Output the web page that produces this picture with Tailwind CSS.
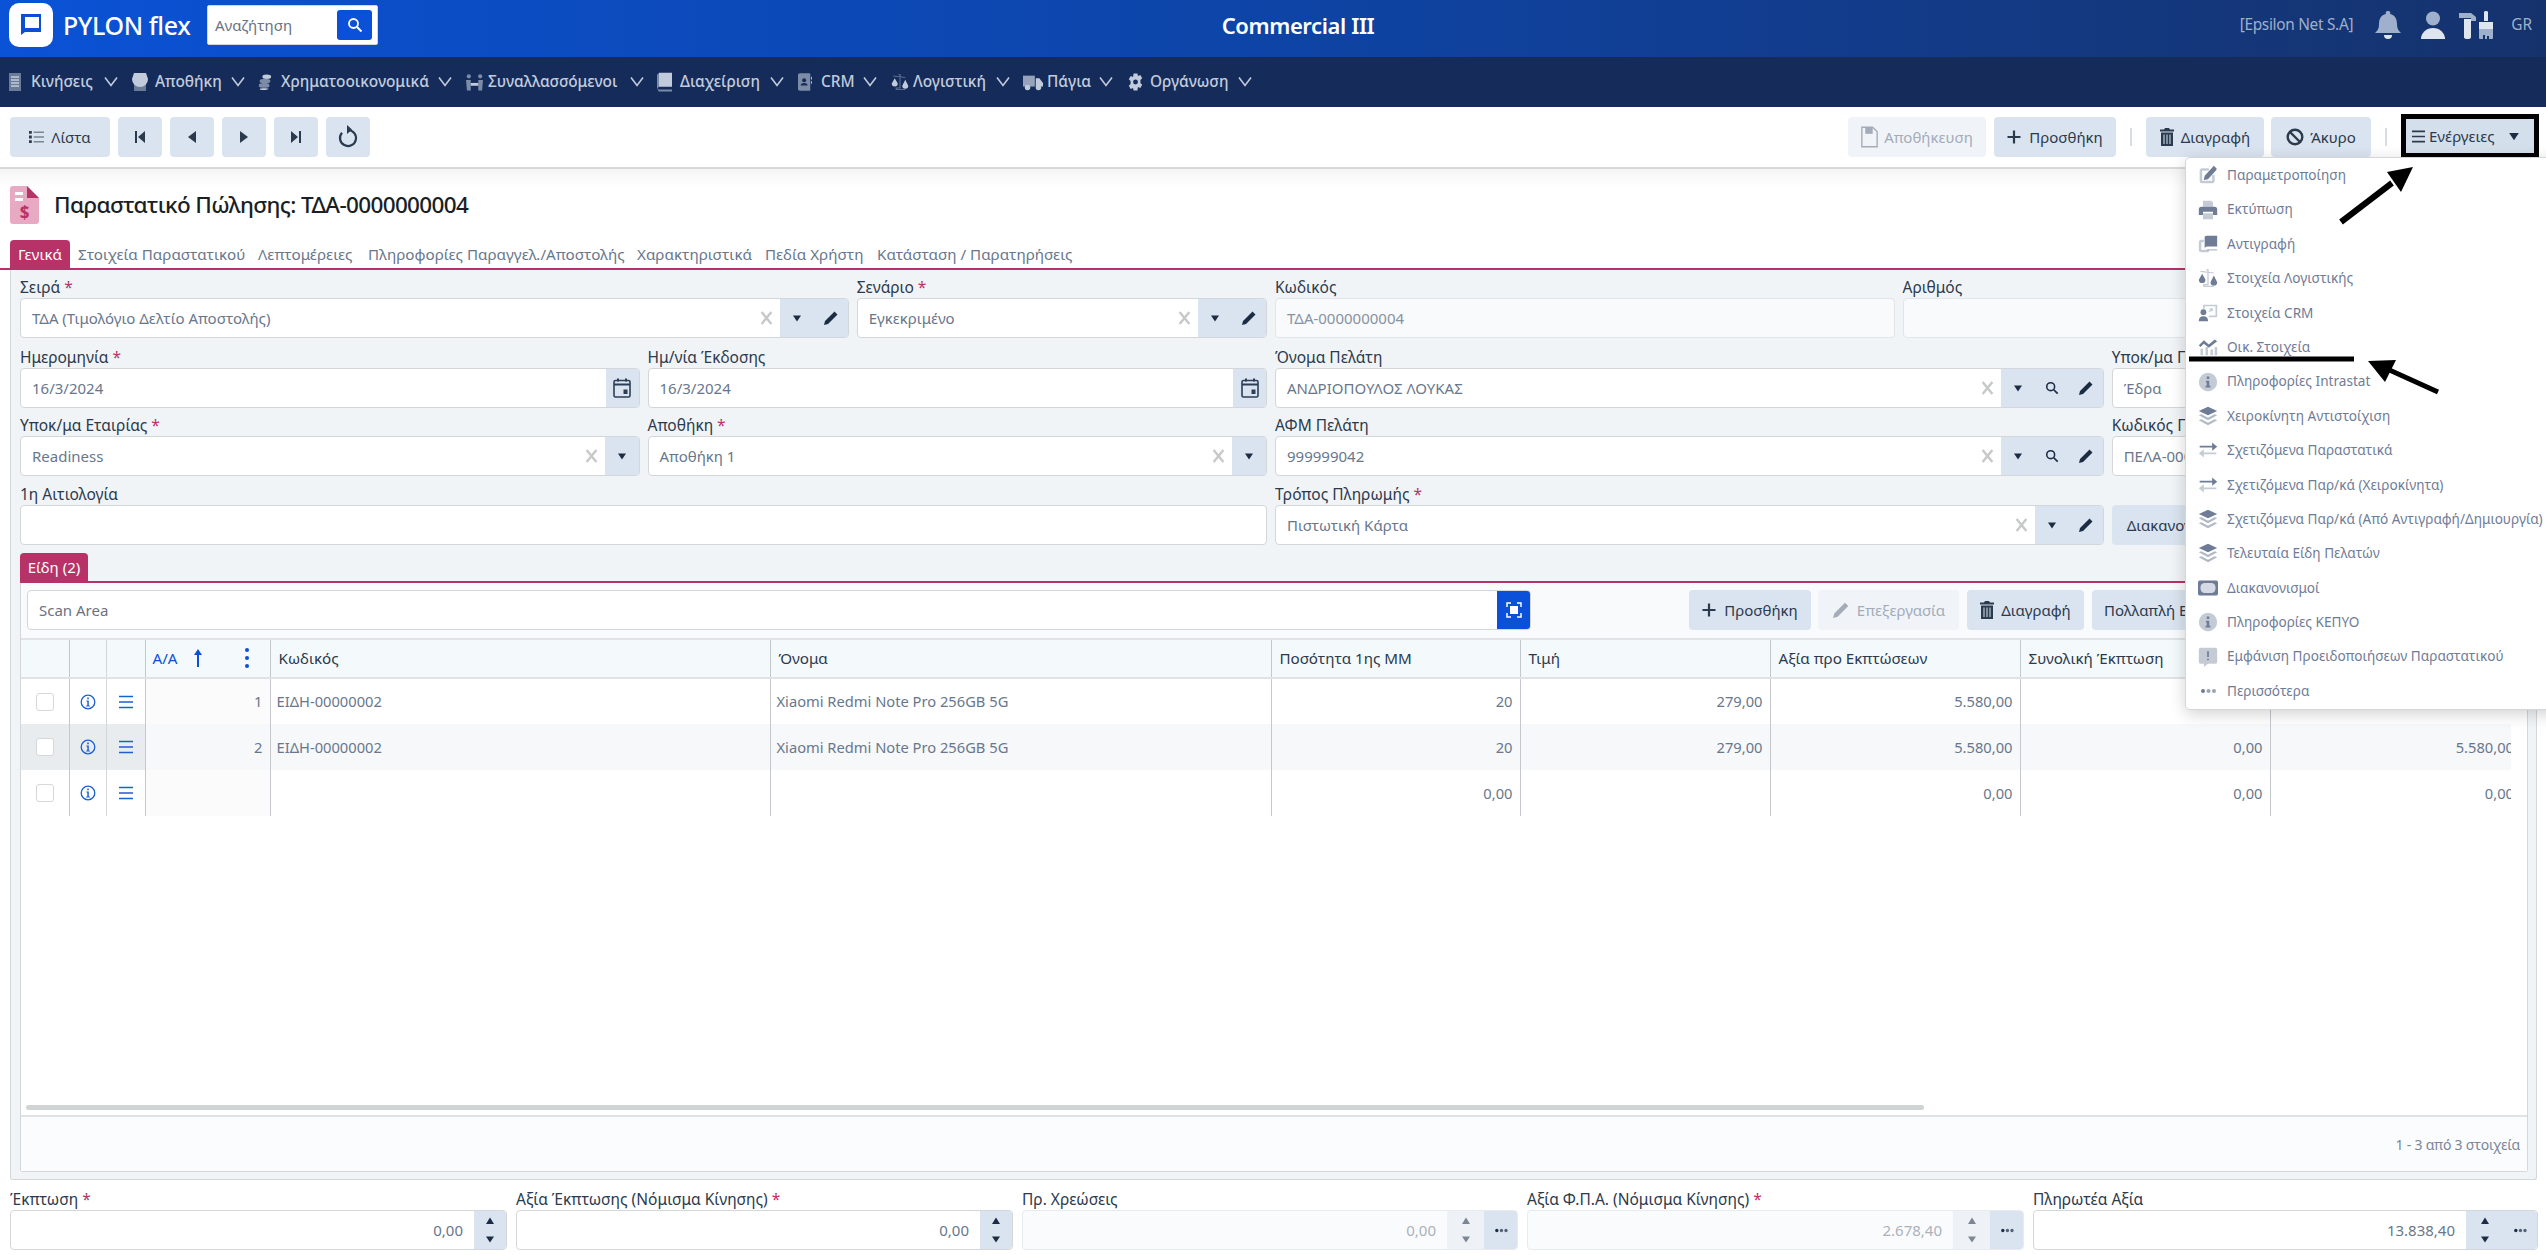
<!DOCTYPE html>
<html lang="el">
<head>
<meta charset="UTF-8">
<title>Commercial III</title>
<script src="https://cdn.jsdelivr.net/npm/@tailwindcss/browser@4"></script>
</head>
<body class="font-['Noto_Sans','Open_Sans',sans-serif] text-[15px] text-[#2b3a4d] bg-white h-screen overflow-hidden relative">

<!-- icon sprites, duotone like the app's icon font -->
<svg class="hidden">
  <symbol id="caret" viewBox="0 0 10 10"><path d="M1 2.5h8L5 8.5z" fill="currentColor"/></symbol>
  <symbol id="caret-up" viewBox="0 0 10 10"><path d="M1 8h8L5 1.5z" fill="currentColor"/></symbol>
  <symbol id="chev" viewBox="0 0 14 14"><path d="M1 2.5l6 8 6-8" fill="none" stroke="currentColor" stroke-width="1.6"/></symbol>
  <symbol id="times" viewBox="0 0 12 14"><path d="M1.5 1.5l9 11M10.5 1.5l-9 11" fill="none" stroke="currentColor" stroke-width="2.2"/></symbol>
  <symbol id="pencil" viewBox="0 0 16 16"><path d="M11.5 1.5l3 3-9.5 9.5-4 1 1-4z M3 11.5l1.5 1.5" fill="currentColor"/></symbol>
  <symbol id="search" viewBox="0 0 16 16"><circle cx="6.5" cy="6.5" r="4.5" fill="none" stroke="currentColor" stroke-width="1.8"/><path d="M10 10l4.5 4.5" stroke="currentColor" stroke-width="2"/></symbol>
  <symbol id="cal" viewBox="0 0 18 20"><path d="M4 0.5h2v3H4zM12 0.5h2v3h-2z" fill="currentColor"/><rect x="1" y="2.5" width="16" height="16.5" rx="1.5" fill="none" stroke="currentColor" stroke-width="1.6"/><path d="M1 6.5h16" stroke="currentColor" stroke-width="2"/><rect x="10.5" y="11.5" width="4" height="4.5" fill="currentColor"/></symbol>
  <symbol id="dots" viewBox="0 0 16 6"><circle cx="3" cy="3" r="2" fill="currentColor"/><circle cx="8.5" cy="3" r="2" fill="currentColor" opacity=".7"/><circle cx="14" cy="3" r="2" fill="currentColor" opacity=".7"/></symbol>
  <symbol id="info" viewBox="0 0 16 16"><circle cx="8" cy="8" r="6.8" fill="none" stroke="currentColor" stroke-width="1.3"/><path d="M7.2 3.6h1.6v1.7H7.2zM6.4 6.6h2.4v5h1v1H6.2v-1h1.1V7.6h-.9z" fill="currentColor"/></symbol>
  <symbol id="lines" viewBox="0 0 14 14"><path d="M0 1.5h14M0 7h14M0 12.5h14" stroke="currentColor" stroke-width="1.7"/></symbol>
  <symbol id="list" viewBox="0 0 16 14"><path d="M0 0.5h3v3H0zM0 5.5h3v3H0zM0 10.5h3v3H0z" fill="currentColor"/><path d="M5 2h11M5 7h11M5 12h11" stroke="currentColor" stroke-width="1.6" opacity=".55"/></symbol>
  <symbol id="trash" viewBox="0 0 14 18"><path d="M5 0h4l1 1.500h4v2H0v-2h4zM1 4.500h12V18H1z" fill="currentColor"/><path d="M4 6.500v9.500M7 6.500v9.500M10 6.500v9.500" stroke="#dae4f0" stroke-width="1"/></symbol>
  <symbol id="ban" viewBox="0 0 18 18"><circle cx="9" cy="9" r="7.300" fill="none" stroke="currentColor" stroke-width="2.400"/><path d="M4 4l10 10" stroke="currentColor" stroke-width="2.400"/></symbol>
  <symbol id="plus" viewBox="0 0 14 14"><path d="M7 0.500v13M0.500 7h13" stroke="currentColor" stroke-width="2.200"/></symbol>
  <symbol id="save" viewBox="0 0 16 20"><path d="M0.800 0.800h10l4.400 4v14.400H0.800z" fill="none" stroke="currentColor" stroke-width="1.300"/><path d="M4 1h7v6H4z" fill="currentColor"/></symbol>

  <symbol id="m-edit" viewBox="0 0 24 24"><path d="M2 7a3 3 0 013-3h8v3H5v12h12v-7h3v7a3 3 0 01-3 3H5a3 3 0 01-3-3z" fill="currentColor" opacity=".4"/><path d="M19 1l3 3a1.500 1.500 0 010 2L12 17l-5 1 1-5z" fill="currentColor"/></symbol>
  <symbol id="m-print" viewBox="0 0 24 24"><path d="M6 1h10l2 2v5H6zM6 16h12v7H6z" fill="currentColor" opacity=".4"/><path d="M4 8h16a3 3 0 013 3v7h-5v-4H6v4H1v-7a3 3 0 013-3z" fill="currentColor"/></symbol>
  <symbol id="m-copy" viewBox="0 0 24 24"><path d="M1 10a3 3 0 013-3h3v3H4v9h9v3H4a3 3 0 01-3-3z" fill="currentColor" opacity=".4"/><path d="M8 17V4a2 2 0 012-2h13v13H11a3 3 0 00-3 3z" fill="currentColor"/><path d="M11 18h12v2H11z" fill="currentColor" opacity=".4"/></symbol>
  <symbol id="m-scale" viewBox="0 0 24 24"><path d="M3 4l16 2M10 2h2v18H7v2h12" fill="none" stroke="currentColor" stroke-width="1.500" opacity=".4"/><path d="M5 7l-4 7a4 4 0 008 0zM19 9l-4 8a4 4 0 008 0z" fill="currentColor"/></symbol>
  <symbol id="m-crm" viewBox="0 0 24 24"><path d="M7 2h15a1 1 0 011 1v13a1 1 0 01-1 1H13v-2h8V4H8v3H6V3a1 1 0 011-1z" fill="currentColor" opacity=".4"/><path d="M13 11l4-4M14 7h3v3" fill="none" stroke="currentColor" stroke-width="1.500" opacity=".4"/><circle cx="6.500" cy="11" r="3.500" fill="currentColor"/><path d="M1 21a5 5 0 015-5h1a5 5 0 015 5v1H1z" fill="currentColor"/></symbol>
  <symbol id="m-chart" viewBox="0 0 24 24"><path d="M3 14h3v8H3zM9 12h3v10H9zM15 15h3v7h-3zM20 12h3v10h-3z" fill="currentColor" opacity=".4"/><path d="M1 10l6-6 6 5 7-6 3 2-10 8-6-5-4 4z" fill="currentColor"/></symbol>
  <symbol id="m-info" viewBox="0 0 24 24"><circle cx="12" cy="12" r="11" fill="currentColor" opacity=".4"/><path d="M10.500 5.500h3v3h-3zM9.500 10.500h4v6h1.500v2H9v-2h1.500v-4h-1z" fill="currentColor"/></symbol>
  <symbol id="m-layers" viewBox="0 0 24 24"><path d="M12 1l11 5-11 5L1 6z" fill="currentColor"/><path d="M1 11l3-1 8 4 8-4 3 1-11 6zM1 17l3-1 8 4 8-4 3 1-11 6z" fill="currentColor" opacity=".55"/></symbol>
  <symbol id="m-arrows" viewBox="0 0 24 24"><path d="M2 7h15V3l6 5-6 5V9H2z" fill="currentColor"/><path d="M22 15H7v-4l-6 5 6 5v-4h15z" fill="currentColor" opacity=".4"/></symbol>
  <symbol id="m-money" viewBox="0 0 24 24"><rect y="3" width="24" height="18" rx="2" fill="currentColor"/><rect x="3" y="6" width="18" height="12" rx="5" fill="#d6dae4"/></symbol>
  <symbol id="m-alert" viewBox="0 0 24 24"><path d="M3 1h18a2 2 0 012 2v15a2 2 0 01-2 2h-9l-5 4v-4H3a2 2 0 01-2-2V3a2 2 0 012-2z" fill="currentColor" opacity=".4"/><path d="M11 5h2v7h-2zM11 14h2v2h-2z" fill="currentColor"/></symbol>

  <symbol id="n-list" viewBox="0 0 12 20"><path d="M0 1h12v18H0z" fill="currentColor" opacity=".5"/><path d="M2 5h8M2 8h8M2 11h8M2 14h8" stroke="currentColor" stroke-width="1.400"/></symbol>
  <symbol id="n-store" viewBox="0 0 16 20"><path d="M2 1h12l2 6a2 2 0 01-16 0z" fill="currentColor"/><path d="M2 10h12v9H2z" fill="currentColor" opacity=".5"/></symbol>
  <symbol id="n-coins" viewBox="0 0 16 20"><ellipse cx="10" cy="4" rx="5" ry="2.500" fill="currentColor"/><path d="M2 8c0-2 12-2 12 0v2c0 2-12 2-12 0zM1 13c0-2 12-2 12 0v2c0 2-12 2-12 0z" fill="currentColor" opacity=".6"/><path d="M2 18c0-1 10-1 10 0s-10 2-10 0z" fill="currentColor"/></symbol>
  <symbol id="n-people" viewBox="0 0 18 20"><circle cx="3" cy="4" r="2.200" fill="currentColor" opacity=".6"/><circle cx="15" cy="4" r="2.200" fill="currentColor" opacity=".6"/><path d="M0 8h5v11H1zM13 8h5l-1 11h-4z" fill="currentColor" opacity=".6"/><path d="M5 11h8v3H5z" fill="currentColor"/></symbol>
  <symbol id="n-book" viewBox="0 0 16 20"><path d="M2 0h14v15H3a3 3 0 00-1 0z" fill="currentColor"/><path d="M0 3a2 2 0 012-2v14a3 3 0 000 5h14v-2H3a3 3 0 01-3-1z" fill="currentColor" opacity=".6"/></symbol>
  <symbol id="n-addr" viewBox="0 0 16 20"><path d="M2 0h11a1 1 0 011 1v18a1 1 0 01-1 1H2a2 2 0 01-2-2V2a2 2 0 012-2z" fill="currentColor" opacity=".6"/><circle cx="7" cy="8" r="2.300" fill="#152c5b"/><path d="M3 14a4 3 0 018 0z" fill="#152c5b"/><path d="M15 4h1v3h-1zM15 9h1v3h-1z" fill="currentColor"/></symbol>
  <symbol id="n-truck" viewBox="0 0 22 20"><path d="M0 3h13v12H0z" fill="currentColor" opacity=".75"/><path d="M14 6h4l4 5v4h-8z" fill="currentColor"/><circle cx="5" cy="16" r="3" fill="currentColor"/><circle cx="17" cy="16" r="3" fill="currentColor"/></symbol>
  <symbol id="n-gear" viewBox="0 0 18 20"><path d="M7 1h4l.6 2.600 2.500-1 2 3.400-1.900 1.900v3.200l1.900 1.900-2 3.400-2.500-1L11 19H7l-.6-2.600-2.500 1-2-3.400 1.900-1.900V8.900L1.900 7l2-3.400 2.500 1z" fill="currentColor"/><circle cx="9" cy="10" r="2.600" fill="#152c5b"/></symbol>
</svg>

<!-- top bar -->
<header class="h-[57px] pb-[7px] bg-linear-to-r from-[#0a52d6] via-[#0d44a6] to-[#15326c] flex items-center relative">
  <div class="ml-[9px] w-[44px] h-[44px] bg-white rounded-[10px] flex items-center justify-center">
    <svg class="w-[24px] h-[24px]" viewBox="0 0 24 24"><path d="M2 1h20v18H6l-4 3z" fill="#0b50cf"/><path d="M6 4h14v11H6z" fill="#fff"/></svg>
  </div>
  <span class="ml-[10px] w-[134px] text-white text-[25px] leading-none font-medium tracking-[-0.4px] whitespace-nowrap">PYLON flex</span>
  <div class="ml-[10px] w-[171px] h-10 bg-white rounded-[2px] border border-[#d4d7d9] flex items-center">
    <span class="ml-[7px] flex-1 text-[#6b7280]">Αναζήτηση</span>
    <span class="mr-[5px] w-[35px] h-[30px] bg-[#0b50d8] rounded-[3px] flex items-center justify-center text-white"><svg class="w-4 h-4"><use href="#search"/></svg></span>
  </div>
  <span class="absolute left-[1198px] top-[10px] w-[200px] leading-[30px] text-center text-white text-[22px] font-semibold whitespace-nowrap tracking-[-0.4px]">Commercial III</span>
  <div class="ml-auto flex items-center text-[#9fb0cc]">
    <span class="mr-[22px] text-[15.4px] tracking-[-0.3px]">[Epsilon Net S.A]</span>
    <svg class="w-[26px] h-[28px] mr-[19px]" viewBox="0 0 26 28"><path d="M13 0a2 2 0 012 3c5 1 7 5 7 10 0 4 1 6 4 9H0c3-3 4-5 4-9 0-5 2-9 7-10a2 2 0 012-3z" fill="currentColor"/><path d="M9 24h8a4 4 0 01-8 0z" fill="#dfe5ee"/></svg>
    <svg class="w-[26px] h-[28px] mr-[13px]" viewBox="0 0 26 28"><circle cx="13" cy="7.500" r="7" fill="currentColor"/><path d="M1 28a12 11 0 0124 0z" fill="#dfe5ee"/></svg>
    <svg class="w-[37px] h-[28px] mr-[15px]" viewBox="0 0 37 28"><path d="M0 2h12l5 4v4h-5V7H0z" fill="currentColor"/><path d="M5 8h7v18a3.500 2 0 01-7 0z" fill="#dfe5ee"/><path d="M25 1a2 1 0 014 0v9h-4z" fill="#dfe5ee"/><path d="M20 11h14v7H20z" fill="#dfe5ee"/><path d="M20 18h14v9a1 1 0 01-1 1h-3v-3h-2v3h-2v-4h-2v4h-3a1 1 0 01-1-1z" fill="currentColor"/></svg>
    <span class="mr-[14px] text-[15.4px]">GR</span>
  </div>
</header>

<!-- main menu -->
<nav class="h-[50px] bg-[#152c5b] flex items-center pl-[9px] text-[#c2cbdb] text-[15.4px] font-medium whitespace-nowrap">
  <svg class="w-[12px] h-[20px] mr-[10px]"><use href="#n-list"/></svg><span class="w-[64px]">Κινήσεις</span><svg class="w-[14px] h-[14px] ml-[9px] mr-[14px]"><use href="#chev"/></svg>
  <svg class="w-[16px] h-[20px] mr-[7px]"><use href="#n-store"/></svg><span class="w-[66px]">Αποθήκη</span><svg class="w-[14px] h-[14px] ml-[10px] mr-[13px]"><use href="#chev"/></svg>
  <svg class="w-[14px] h-[20px] mr-[9px]"><use href="#n-coins"/></svg><span class="w-[148px]">Χρηματοοικονομικά</span><svg class="w-[14px] h-[14px] ml-[9px] mr-[14px]"><use href="#chev"/></svg>
  <svg class="w-[17px] h-[20px] mr-[5px]"><use href="#n-people"/></svg><span class="w-[132px]">Συναλλασσόμενοι</span><svg class="w-[14px] h-[14px] ml-[10px] mr-[13px]"><use href="#chev"/></svg>
  <svg class="w-[15px] h-[20px] mr-[8px]"><use href="#n-book"/></svg><span class="w-[80px]">Διαχείριση</span><svg class="w-[14px] h-[14px] ml-[10px] mr-[14px]"><use href="#chev"/></svg>
  <svg class="w-[14px] h-[20px] mr-[9px]"><use href="#n-addr"/></svg><span class="w-[33px]">CRM</span><svg class="w-[14px] h-[14px] ml-[9px] mr-[14px]"><use href="#chev"/></svg>
  <svg class="w-[18px] h-[20px] mr-[4px]"><use href="#m-scale"/></svg><span class="w-[73px]">Λογιστική</span><svg class="w-[14px] h-[14px] ml-[10px] mr-[13px]"><use href="#chev"/></svg>
  <svg class="w-[20px] h-[20px] mr-[4px]"><use href="#n-truck"/></svg><span class="w-[43px]">Πάγια</span><svg class="w-[14px] h-[14px] ml-[9px] mr-[14px]"><use href="#chev"/></svg>
  <svg class="w-[17px] h-[20px] mr-[6px]"><use href="#n-gear"/></svg><span class="w-[78px]">Οργάνωση</span><svg class="w-[14px] h-[14px] ml-[10px]"><use href="#chev"/></svg>
</nav>

<!-- record toolbar -->
<div class="h-[62px] border-b-2 border-[#d8d8d8] flex items-start pt-[10px] pl-[10px] pr-[7px]">
  <button class="w-[100px] h-10 bg-[#dae4f0] rounded-[4px] flex items-center justify-center gap-[7px]"><svg class="w-[15px] h-[14px]"><use href="#list"/></svg>Λίστα</button>
  <button class="ml-2 w-[44px] h-10 bg-[#dae4f0] rounded-[4px] flex items-center justify-center"><svg class="w-[12px] h-[14px]" viewBox="0 0 12 14"><path d="M1 1h2v12H1zM11 1v12L4 7z" fill="currentColor"/></svg></button>
  <button class="ml-2 w-[44px] h-10 bg-[#dae4f0] rounded-[4px] flex items-center justify-center"><svg class="w-[10px] h-[14px]" viewBox="0 0 10 14"><path d="M9 1v12L1 7z" fill="currentColor"/></svg></button>
  <button class="ml-2 w-[44px] h-10 bg-[#dae4f0] rounded-[4px] flex items-center justify-center"><svg class="w-[10px] h-[14px]" viewBox="0 0 10 14"><path d="M1 1v12l8-6z" fill="currentColor"/></svg></button>
  <button class="ml-2 w-[44px] h-10 bg-[#dae4f0] rounded-[4px] flex items-center justify-center"><svg class="w-[12px] h-[14px]" viewBox="0 0 12 14"><path d="M1 1v12l7-6zM9 1h2v12H9z" fill="currentColor"/></svg></button>
  <button class="ml-2 w-[44px] h-10 bg-[#dae4f0] rounded-[4px] flex items-center justify-center"><svg class="w-[20px] h-[24px]" viewBox="0 0 20 24"><path d="M10 5a8 8 0 11-6 2.700" fill="none" stroke="currentColor" stroke-width="2.200"/><path d="M9 0v9l5-4.500z" fill="currentColor"/></svg></button>

  <button class="ml-auto w-[138px] h-10 bg-[#f0f4f8] rounded-[4px] flex items-center justify-center gap-[6px] text-[#a4acb8]"><svg class="w-[17px] h-[22px]"><use href="#save"/></svg>Αποθήκευση</button>
  <button class="ml-2 w-[122px] h-10 bg-[#dae4f0] rounded-[4px] flex items-center justify-center gap-[8px]"><svg class="w-[14px] h-[14px]"><use href="#plus"/></svg>Προσθήκη</button>
  <span class="ml-[14px] mt-[11px] w-[2px] h-[18px] bg-[#d8dde3]"></span>
  <button class="ml-[14px] w-[118px] h-10 bg-[#dae4f0] rounded-[4px] flex items-center justify-center gap-[7px]"><svg class="w-[14px] h-[18px]"><use href="#trash"/></svg>Διαγραφή</button>
  <button class="ml-[7px] w-[100px] h-10 bg-[#dae4f0] rounded-[4px] flex items-center justify-center gap-[6px]"><svg class="w-[18px] h-[18px]"><use href="#ban"/></svg>Άκυρο</button>
  <span class="ml-[14px] mt-[11px] w-[2px] h-[18px] bg-[#d8dde3]"></span>
  <div class="ml-[14px] -mt-[3px] w-[138px] h-[44px] border-[5px] border-black bg-[#d4dfec] flex items-center pl-[6px]">
    <svg class="w-[13px] h-[13px] mr-[4px]"><use href="#lines"/></svg>Ενέργειες<svg class="ml-[13px] w-[12px] h-[12px] text-[#1c2c44]"><use href="#caret"/></svg>
  </div>
</div>

<!-- title -->
<div class="h-[71px] bg-linear-to-b from-[#f5f5f5] to-white to-[25%] flex items-center pl-[10px]">
  <svg class="w-[29px] h-[38px]" viewBox="0 0 29 38"><path d="M3 0h14l12 12v23a3 3 0 01-3 3H3a3 3 0 01-3-3V3a3 3 0 013-3z" fill="#e8a9c3"/><path d="M17 0l12 12H17z" fill="#b73266"/><path d="M5 6h8v3H5zM5 12h8v3H5z" fill="#fff"/><text x="14.500" y="33" text-anchor="middle" font-size="17" font-weight="700" fill="#b73266">$</text></svg>
  <h1 class="ml-[15px] text-[#1a1f26] text-[22.5px] font-medium tracking-[-0.65px]">Παραστατικό Πώλησης: ΤΔΑ-0000000004</h1>
</div>

<!-- header tabs -->
<div class="h-[30px] flex items-end pl-[10px] border-b-2 border-[#b9316a] text-[#68778c] text-[15.2px] whitespace-nowrap">
  <span class="w-[60px] h-[28px] bg-[#b73266] rounded-t-[4px] text-white flex items-center justify-center">Γενικά</span>
  <span class="ml-2 w-[165px] h-[28px] flex items-center">Στοιχεία Παραστατικού</span>
  <span class="ml-[15px] w-[95px] h-[28px] flex items-center">Λεπτομέρειες</span>
  <span class="ml-[15px] w-[254px] h-[28px] flex items-center">Πληροφορίες Παραγγελ./Αποστολής</span>
  <span class="ml-[15px] w-[113px] h-[28px] flex items-center">Χαρακτηριστικά</span>
  <span class="ml-[15px] w-[97px] h-[28px] flex items-center">Πεδία Χρήστη</span>
  <span class="ml-[15px] h-[28px] flex items-center">Κατάσταση / Παρατηρήσεις</span>
</div>

<!-- main panel -->
<div class="h-[910px] mx-[10px] mr-[9px] bg-[#f1f4f6] border-x border-b border-[#d4d7d9] rounded-b-[3px] pl-[9px] pr-[8px] pt-[8px]">

  <div class="grid grid-cols-12 gap-x-2 w-[2502px]">
    <div class="col-span-4">
      <label class="h-5 flex items-center text-[15.5px]">Σειρά<span class="ml-1 text-[#b9316a]">*</span></label>
      <div class="h-10 bg-white border border-[#d4d7d9] rounded-[4px] flex items-center overflow-hidden text-[#68778c]"><span class="pl-[11px] flex-1">ΤΔΑ (Τιμολόγιο Δελτίο Αποστολής)</span><svg class="w-[13px] h-[16px] mr-[7px] text-[#c6c8ca]"><use href="#times"/></svg><span class="w-[34px] h-full bg-[#dae4f0] flex items-center justify-center text-[#1c2c44]"><svg class="w-[10px] h-[10px]"><use href="#caret"/></svg></span><span class="w-[34px] h-full bg-[#dae4f0] flex items-center justify-center text-[#1c2c44]"><svg class="w-[16px] h-[16px]"><use href="#pencil"/></svg></span></div>
    </div>
    <div class="col-span-2">
      <label class="h-5 flex items-center text-[15.5px]">Σενάριο<span class="ml-1 text-[#b9316a]">*</span></label>
      <div class="h-10 bg-white border border-[#d4d7d9] rounded-[4px] flex items-center overflow-hidden text-[#68778c]"><span class="pl-[11px] flex-1">Εγκεκριμένο</span><svg class="w-[13px] h-[16px] mr-[7px] text-[#c6c8ca]"><use href="#times"/></svg><span class="w-[34px] h-full bg-[#dae4f0] flex items-center justify-center text-[#1c2c44]"><svg class="w-[10px] h-[10px]"><use href="#caret"/></svg></span><span class="w-[34px] h-full bg-[#dae4f0] flex items-center justify-center text-[#1c2c44]"><svg class="w-[16px] h-[16px]"><use href="#pencil"/></svg></span></div>
    </div>
    <div class="col-span-3">
      <label class="h-5 flex items-center text-[15.5px]">Κωδικός</label>
      <div class="h-10 bg-[#f8fafb] border border-[#e2e6ea] rounded-[4px] flex items-center text-[#8792a2]"><span class="pl-[11px]">ΤΔΑ-0000000004</span></div>
    </div>
    <div class="col-span-3">
      <label class="h-5 flex items-center text-[15.5px]">Αριθμός</label>
      <div class="h-10 bg-[#f8fafb] border border-[#e2e6ea] rounded-[4px]"></div>
    </div>
  </div>

  <div class="grid grid-cols-12 gap-x-2 w-[2502px] mt-[10px]">
    <div class="col-span-3">
      <label class="h-5 flex items-center text-[15.5px]">Ημερομηνία<span class="ml-1 text-[#b9316a]">*</span></label>
      <div class="h-10 bg-white border border-[#d4d7d9] rounded-[4px] flex items-center overflow-hidden text-[#68778c]"><span class="pl-[11px] flex-1">16/3/2024</span><span class="w-[33px] h-full bg-[#dae4f0] flex items-center justify-center text-[#2c3e55]"><svg class="w-[18px] h-[20px]"><use href="#cal"/></svg></span></div>
    </div>
    <div class="col-span-3">
      <label class="h-5 flex items-center text-[15.5px]">Ημ/νία Έκδοσης</label>
      <div class="h-10 bg-white border border-[#d4d7d9] rounded-[4px] flex items-center overflow-hidden text-[#68778c]"><span class="pl-[11px] flex-1">16/3/2024</span><span class="w-[33px] h-full bg-[#dae4f0] flex items-center justify-center text-[#2c3e55]"><svg class="w-[18px] h-[20px]"><use href="#cal"/></svg></span></div>
    </div>
    <div class="col-span-4">
      <label class="h-5 flex items-center text-[15.5px]">Όνομα Πελάτη</label>
      <div class="h-10 bg-white border border-[#d4d7d9] rounded-[4px] flex items-center overflow-hidden text-[#68778c]"><span class="pl-[11px] flex-1">ΑΝΔΡΙΟΠΟΥΛΟΣ ΛΟΥΚΑΣ</span><svg class="w-[13px] h-[16px] mr-[7px] text-[#c6c8ca]"><use href="#times"/></svg><span class="w-[34px] h-full bg-[#dae4f0] flex items-center justify-center text-[#1c2c44]"><svg class="w-[10px] h-[10px]"><use href="#caret"/></svg></span><span class="w-[34px] h-full bg-[#dae4f0] flex items-center justify-center text-[#1c2c44]"><svg class="w-[14px] h-[14px]"><use href="#search"/></svg></span><span class="w-[34px] h-full bg-[#dae4f0] flex items-center justify-center text-[#1c2c44]"><svg class="w-[16px] h-[16px]"><use href="#pencil"/></svg></span></div>
    </div>
    <div class="col-span-2">
      <label class="h-5 flex items-center text-[15.5px]">Υποκ/μα Πελάτη</label>
      <div class="h-10 bg-white border border-[#d4d7d9] rounded-[4px] flex items-center text-[#68778c]"><span class="pl-[11px]">Έδρα</span></div>
    </div>
  </div>

  <div class="grid grid-cols-12 gap-x-2 w-[2502px] mt-[8px]">
    <div class="col-span-3">
      <label class="h-5 flex items-center text-[15.5px]">Υποκ/μα Εταιρίας<span class="ml-1 text-[#b9316a]">*</span></label>
      <div class="h-10 bg-white border border-[#d4d7d9] rounded-[4px] flex items-center overflow-hidden text-[#68778c]"><span class="pl-[11px] flex-1">Readiness</span><svg class="w-[13px] h-[16px] mr-[7px] text-[#c6c8ca]"><use href="#times"/></svg><span class="w-[34px] h-full bg-[#dae4f0] flex items-center justify-center text-[#1c2c44]"><svg class="w-[10px] h-[10px]"><use href="#caret"/></svg></span></div>
    </div>
    <div class="col-span-3">
      <label class="h-5 flex items-center text-[15.5px]">Αποθήκη<span class="ml-1 text-[#b9316a]">*</span></label>
      <div class="h-10 bg-white border border-[#d4d7d9] rounded-[4px] flex items-center overflow-hidden text-[#68778c]"><span class="pl-[11px] flex-1">Αποθήκη 1</span><svg class="w-[13px] h-[16px] mr-[7px] text-[#c6c8ca]"><use href="#times"/></svg><span class="w-[34px] h-full bg-[#dae4f0] flex items-center justify-center text-[#1c2c44]"><svg class="w-[10px] h-[10px]"><use href="#caret"/></svg></span></div>
    </div>
    <div class="col-span-4">
      <label class="h-5 flex items-center text-[15.5px]">ΑΦΜ Πελάτη</label>
      <div class="h-10 bg-white border border-[#d4d7d9] rounded-[4px] flex items-center overflow-hidden text-[#68778c]"><span class="pl-[11px] flex-1">999999042</span><svg class="w-[13px] h-[16px] mr-[7px] text-[#c6c8ca]"><use href="#times"/></svg><span class="w-[34px] h-full bg-[#dae4f0] flex items-center justify-center text-[#1c2c44]"><svg class="w-[10px] h-[10px]"><use href="#caret"/></svg></span><span class="w-[34px] h-full bg-[#dae4f0] flex items-center justify-center text-[#1c2c44]"><svg class="w-[14px] h-[14px]"><use href="#search"/></svg></span><span class="w-[34px] h-full bg-[#dae4f0] flex items-center justify-center text-[#1c2c44]"><svg class="w-[16px] h-[16px]"><use href="#pencil"/></svg></span></div>
    </div>
    <div class="col-span-2">
      <label class="h-5 flex items-center text-[15.5px]">Κωδικός Πελάτη</label>
      <div class="h-10 bg-white border border-[#d4d7d9] rounded-[4px] flex items-center text-[#68778c]"><span class="pl-[11px]">ΠΕΛΑ-0000000042</span></div>
    </div>
  </div>

  <div class="grid grid-cols-12 gap-x-2 w-[2502px] mt-[9px]">
    <div class="col-span-6">
      <label class="h-5 flex items-center text-[15.5px]">1η Αιτιολογία</label>
      <div class="h-10 bg-white border border-[#d4d7d9] rounded-[4px]"></div>
    </div>
    <div class="col-span-4">
      <label class="h-5 flex items-center text-[15.5px]">Τρόπος Πληρωμής<span class="ml-1 text-[#b9316a]">*</span></label>
      <div class="h-10 bg-white border border-[#d4d7d9] rounded-[4px] flex items-center overflow-hidden text-[#68778c]"><span class="pl-[11px] flex-1">Πιστωτική Κάρτα</span><svg class="w-[13px] h-[16px] mr-[7px] text-[#c6c8ca]"><use href="#times"/></svg><span class="w-[34px] h-full bg-[#dae4f0] flex items-center justify-center text-[#1c2c44]"><svg class="w-[10px] h-[10px]"><use href="#caret"/></svg></span><span class="w-[34px] h-full bg-[#dae4f0] flex items-center justify-center text-[#1c2c44]"><svg class="w-[16px] h-[16px]"><use href="#pencil"/></svg></span></div>
    </div>
    <div class="col-span-2 pt-5">
      <button class="w-full h-10 bg-[#dae4f0] rounded-[4px] pl-[15px] text-left">Διακανονισμοί</button>
    </div>
  </div>

  <!-- lines tab -->
  <div class="mt-[9px] h-[29px] flex items-end border-b-2 border-[#b9316a]">
    <span class="w-[68px] h-[28px] bg-[#b73266] rounded-t-[4px] text-white flex items-center justify-center">Είδη (2)</span>
  </div>

  <div class="w-[2508px] h-[589px] bg-[#f8fafb] border-x border-b border-[#d4d7d9] rounded-b-[3px] flex flex-col">
    <div class="h-[55px] shrink-0 flex items-start pt-[7px] pl-[6px]">
      <div class="w-[1504px] h-10 bg-white border border-[#d4d7d9] rounded-[4px] flex items-center overflow-hidden text-[#6b7280]">
        <span class="pl-[11px] flex-1">Scan Area</span>
        <span class="w-[33px] h-full bg-[#0b50d8] flex items-center justify-center"><svg class="w-[16px] h-[16px]" viewBox="0 0 16 16"><path d="M1 5V1h4M11 1h4v4M15 11v4h-4M5 15H1v-4" fill="none" stroke="#fff" stroke-width="1.500"/><rect x="4" y="4" width="8" height="8" fill="#fff"/></svg></span>
      </div>
      <button class="ml-[158px] w-[122px] h-10 bg-[#dae4f0] rounded-[4px] flex items-center justify-center gap-[8px]"><svg class="w-[14px] h-[14px]"><use href="#plus"/></svg>Προσθήκη</button>
      <button class="ml-[7px] w-[141px] h-10 bg-[#f0f4f8] rounded-[4px] flex items-center justify-center gap-[7px] text-[#a4acb8]"><svg class="w-[18px] h-[18px]"><use href="#pencil"/></svg>Επεξεργασία</button>
      <button class="ml-[8px] w-[117px] h-10 bg-[#dae4f0] rounded-[4px] flex items-center justify-center gap-[7px]"><svg class="w-[14px] h-[18px]"><use href="#trash"/></svg>Διαγραφή</button>
      <button class="ml-[8px] w-[200px] h-10 bg-[#dae4f0] rounded-[4px] pl-[12px] text-left">Πολλαπλή Επεξεργασία</button>
    </div>

    <div class="flex-1 min-h-0 bg-white relative overflow-hidden border-t-2 border-[#dfe3e6]">
      <table class="w-[2500px] table-fixed border-collapse text-[#68778c] text-[14.7px]">
        <colgroup>
          <col class="w-[48px]"><col class="w-[37px]"><col class="w-[39px]"><col class="w-[125px]"><col class="w-[500px]"><col class="w-[501px]"><col class="w-[249px]"><col class="w-[250px]"><col class="w-[250px]"><col class="w-[250px]"><col class="w-[251px]">
        </colgroup>
        <thead class="text-[15.2px]">
          <tr class="h-[38px] bg-[#f4f9fc] text-[#2b3a4d] border-b-2 border-[#dfe3e6] text-left">
            <th class="font-normal border-r border-[#c4c8cc]"></th>
            <th class="font-normal border-r border-[#d4d7d9]"></th>
            <th class="font-normal border-r border-[#c4c8cc]"></th>
            <th class="font-normal border-r border-[#c4c8cc] pl-[7px]">
              <div class="flex items-center text-[#0b50d8]"><span class="w-[40px]">Α/Α</span><svg class="w-[10px] h-[18px]" viewBox="0 0 10 18"><path d="M5 0l4 6H6v12H4V6H1z" fill="currentColor"/></svg><span class="ml-[42px] w-[4px] flex flex-col gap-[4px]"><i class="block w-[4px] h-[4px] rounded-full bg-current"></i><i class="block w-[4px] h-[4px] rounded-full bg-current"></i><i class="block w-[4px] h-[4px] rounded-full bg-current"></i></span></div>
            </th>
            <th class="font-normal border-r border-[#c4c8cc] pl-[8px]">Κωδικός</th>
            <th class="font-normal border-r border-[#c4c8cc] pl-[8px]">Όνομα</th>
            <th class="font-normal border-r border-[#c4c8cc] pl-[8px]">Ποσότητα 1ης ΜΜ</th>
            <th class="font-normal border-r border-[#c4c8cc] pl-[8px]">Τιμή</th>
            <th class="font-normal border-r border-[#c4c8cc] pl-[8px]">Αξία προ Εκπτώσεων</th>
            <th class="font-normal border-r border-[#c4c8cc] pl-[8px]">Συνολική Έκπτωση</th>
            <th class="font-normal pl-[8px]">Καθαρή Αξία</th>
          </tr>
        </thead>
        <tbody>
          <tr class="h-[46px]">
            <td class="border-r border-[#c4c8cc]"><span class="block mx-auto w-[18px] h-[18px] bg-white border border-[#d5d8db] rounded-[3px]"></span></td>
            <td class="border-r border-[#d4d7d9] text-[#1c5fd0]"><svg class="block mx-auto w-[16px] h-[16px]"><use href="#info"/></svg></td>
            <td class="border-r border-[#c4c8cc] text-[#1c5fd0]"><svg class="block mx-auto w-[14px] h-[14px]"><use href="#lines"/></svg></td>
            <td class="bg-[#fbfbfb] border-r border-[#c4c8cc] text-right pr-[7px]">1</td>
            <td class="border-r border-[#c4c8cc] pl-[6px]">ΕΙΔΗ-00000002</td>
            <td class="border-r border-[#c4c8cc] pl-[6px]">Xiaomi Redmi Note Pro 256GB 5G</td>
            <td class="border-r border-[#c4c8cc] text-right pr-[7px]">20</td>
            <td class="border-r border-[#c4c8cc] text-right pr-[7px]">279,00</td>
            <td class="border-r border-[#c4c8cc] text-right pr-[7px]">5.580,00</td>
            <td class="border-r border-[#c4c8cc] text-right pr-[7px]">0,00</td>
            <td class="text-right pr-[7px]">5.580,00</td>
          </tr>
          <tr class="h-[46px] bg-[#f6f8fa]">
            <td class="bg-[#e8ecef] border-r border-[#c4c8cc]"><span class="block mx-auto w-[18px] h-[18px] bg-white border border-[#d5d8db] rounded-[3px]"></span></td>
            <td class="bg-[#e8ecef] border-r border-[#d4d7d9] text-[#1c5fd0]"><svg class="block mx-auto w-[16px] h-[16px]"><use href="#info"/></svg></td>
            <td class="bg-[#e8ecef] border-r border-[#c4c8cc] text-[#1c5fd0]"><svg class="block mx-auto w-[14px] h-[14px]"><use href="#lines"/></svg></td>
            <td class="border-r border-[#c4c8cc] text-right pr-[7px]">2</td>
            <td class="border-r border-[#c4c8cc] pl-[6px]">ΕΙΔΗ-00000002</td>
            <td class="border-r border-[#c4c8cc] pl-[6px]">Xiaomi Redmi Note Pro 256GB 5G</td>
            <td class="border-r border-[#c4c8cc] text-right pr-[7px]">20</td>
            <td class="border-r border-[#c4c8cc] text-right pr-[7px]">279,00</td>
            <td class="border-r border-[#c4c8cc] text-right pr-[7px]">5.580,00</td>
            <td class="border-r border-[#c4c8cc] text-right pr-[7px]">0,00</td>
            <td class="text-right pr-[7px]">5.580,00</td>
          </tr>
          <tr class="h-[46px]">
            <td class="border-r border-[#c4c8cc]"><span class="block mx-auto w-[18px] h-[18px] bg-white border border-[#d5d8db] rounded-[3px]"></span></td>
            <td class="border-r border-[#d4d7d9] text-[#1c5fd0]"><svg class="block mx-auto w-[16px] h-[16px]"><use href="#info"/></svg></td>
            <td class="border-r border-[#c4c8cc] text-[#1c5fd0]"><svg class="block mx-auto w-[14px] h-[14px]"><use href="#lines"/></svg></td>
            <td class="bg-[#fbfbfb] border-r border-[#c4c8cc]"></td>
            <td class="border-r border-[#c4c8cc]"></td>
            <td class="border-r border-[#c4c8cc]"></td>
            <td class="border-r border-[#c4c8cc] text-right pr-[7px]">0,00</td>
            <td class="border-r border-[#c4c8cc]"></td>
            <td class="border-r border-[#c4c8cc] text-right pr-[7px]">0,00</td>
            <td class="border-r border-[#c4c8cc] text-right pr-[7px]">0,00</td>
            <td class="text-right pr-[7px]">0,00</td>
          </tr>
        </tbody>
      </table>
      <!-- scrollbar thumb and the white strip right of the clipped table -->
      <span class="absolute left-[5px] bottom-[5px] w-[1898px] h-[5px] rounded-full bg-[#d0d4d4]"></span>
      <span class="absolute top-0 bottom-0 right-0 w-[16px] bg-white"></span>
    </div>

    <div class="h-[56px] shrink-0 border-t-2 border-[#dfe3e6] bg-[#fbfcfe] flex items-center justify-end pr-[7px] text-[14px] text-[#7a869a] tracking-[-0.2px]">1 - 3 από 3 στοιχεία</div>
  </div>
</div>

<!-- totals -->
<div class="mt-[10px] grid grid-cols-[497px_497px_496px_497px_505px] gap-x-[9px] pl-[10px]">
  <div>
    <label class="h-5 flex items-center text-[15.5px]">Έκπτωση<span class="ml-1 text-[#b9316a]">*</span></label>
    <div class="h-10 bg-white border border-[#d4d7d9] rounded-[4px] flex items-center overflow-hidden text-[#68778c]"><span class="flex-1 text-right pr-[11px]">0,00</span><span class="w-[32px] h-full bg-[#dae4f0] flex flex-col items-center justify-center gap-[8px] text-[#1c2c44]"><svg class="w-[10px] h-[10px]"><use href="#caret-up"/></svg><svg class="w-[10px] h-[10px]"><use href="#caret"/></svg></span></div>
  </div>
  <div>
    <label class="h-5 flex items-center text-[15.5px]">Αξία Έκπτωσης (Νόμισμα Κίνησης)<span class="ml-1 text-[#b9316a]">*</span></label>
    <div class="h-10 bg-white border border-[#d4d7d9] rounded-[4px] flex items-center overflow-hidden text-[#68778c]"><span class="flex-1 text-right pr-[11px]">0,00</span><span class="w-[32px] h-full bg-[#dae4f0] flex flex-col items-center justify-center gap-[8px] text-[#1c2c44]"><svg class="w-[10px] h-[10px]"><use href="#caret-up"/></svg><svg class="w-[10px] h-[10px]"><use href="#caret"/></svg></span></div>
  </div>
  <div>
    <label class="h-5 flex items-center text-[15.5px]">Πρ. Χρεώσεις</label>
    <div class="h-10 bg-[#fafbfc] border border-[#e8ebee] rounded-[4px] flex items-center overflow-hidden text-[#aab2bd]"><span class="flex-1 text-right pr-[11px]">0,00</span><span class="w-[37px] h-full bg-[#eef2f7] flex flex-col items-center justify-center gap-[8px] text-[#7b8794]"><svg class="w-[10px] h-[10px]"><use href="#caret-up"/></svg><svg class="w-[10px] h-[10px]"><use href="#caret"/></svg></span><span class="w-[33px] h-full bg-[#dae4f0] flex items-center justify-center text-[#1c2c44]"><svg class="w-[14px] h-[5px]"><use href="#dots"/></svg></span></div>
  </div>
  <div>
    <label class="h-5 flex items-center text-[15.5px]">Αξία Φ.Π.Α. (Νόμισμα Κίνησης)<span class="ml-1 text-[#b9316a]">*</span></label>
    <div class="h-10 bg-[#fafbfc] border border-[#e8ebee] rounded-[4px] flex items-center overflow-hidden text-[#aab2bd]"><span class="flex-1 text-right pr-[11px]">2.678,40</span><span class="w-[37px] h-full bg-[#eef2f7] flex flex-col items-center justify-center gap-[8px] text-[#7b8794]"><svg class="w-[10px] h-[10px]"><use href="#caret-up"/></svg><svg class="w-[10px] h-[10px]"><use href="#caret"/></svg></span><span class="w-[33px] h-full bg-[#dae4f0] flex items-center justify-center text-[#1c2c44]"><svg class="w-[14px] h-[5px]"><use href="#dots"/></svg></span></div>
  </div>
  <div>
    <label class="h-5 flex items-center text-[15.5px]">Πληρωτέα Αξία</label>
    <div class="h-10 bg-white border border-[#d4d7d9] rounded-[4px] flex items-center overflow-hidden text-[#68778c]"><span class="flex-1 text-right pr-[11px]">13.838,40</span><span class="w-[37px] h-full bg-[#dae4f0] flex flex-col items-center justify-center gap-[8px] text-[#1c2c44]"><svg class="w-[10px] h-[10px]"><use href="#caret-up"/></svg><svg class="w-[10px] h-[10px]"><use href="#caret"/></svg></span><span class="w-[34px] h-full bg-[#dae4f0] flex items-center justify-center text-[#1c2c44]"><svg class="w-[14px] h-[5px]"><use href="#dots"/></svg></span></div>
  </div>
</div>

<!-- actions menu, open -->
<div class="absolute left-[2185px] top-[157px] w-[380px] h-[553px] bg-white border border-[#d4d7d9] rounded-[5px] shadow-[0_4px_16px_rgba(0,0,0,0.18)] text-[#6f7c96] text-[13.6px] whitespace-nowrap">
  <div class="h-[34.4px] flex items-center pl-[12px]"><svg class="w-[20px] h-[20px] mr-[9px]"><use href="#m-edit"/></svg>Παραμετροποίηση</div>
  <div class="h-[34.4px] flex items-center pl-[12px]"><svg class="w-[20px] h-[20px] mr-[9px]"><use href="#m-print"/></svg>Εκτύπωση</div>
  <div class="h-[34.4px] flex items-center pl-[12px]"><svg class="w-[20px] h-[20px] mr-[9px]"><use href="#m-copy"/></svg>Αντιγραφή</div>
  <div class="h-[34.4px] flex items-center pl-[12px]"><svg class="w-[20px] h-[20px] mr-[9px]"><use href="#m-scale"/></svg>Στοιχεία Λογιστικής</div>
  <div class="h-[34.4px] flex items-center pl-[12px]"><svg class="w-[20px] h-[20px] mr-[9px]"><use href="#m-crm"/></svg>Στοιχεία CRM</div>
  <div class="h-[34.4px] flex items-center pl-[12px]"><svg class="w-[20px] h-[20px] mr-[9px]"><use href="#m-chart"/></svg>Οικ. Στοιχεία</div>
  <div class="h-[34.4px] flex items-center pl-[12px]"><svg class="w-[20px] h-[20px] mr-[9px]"><use href="#m-info"/></svg>Πληροφορίες Intrastat</div>
  <div class="h-[34.4px] flex items-center pl-[12px]"><svg class="w-[20px] h-[20px] mr-[9px]"><use href="#m-layers"/></svg>Χειροκίνητη Αντιστοίχιση</div>
  <div class="h-[34.4px] flex items-center pl-[12px]"><svg class="w-[20px] h-[20px] mr-[9px]"><use href="#m-arrows"/></svg>Σχετιζόμενα Παραστατικά</div>
  <div class="h-[34.4px] flex items-center pl-[12px]"><svg class="w-[20px] h-[20px] mr-[9px]"><use href="#m-arrows"/></svg>Σχετιζόμενα Παρ/κά (Χειροκίνητα)</div>
  <div class="h-[34.4px] flex items-center pl-[12px]"><svg class="w-[20px] h-[20px] mr-[9px]"><use href="#m-layers"/></svg>Σχετιζόμενα Παρ/κά (Από Αντιγραφή/Δημιουργία)</div>
  <div class="h-[34.4px] flex items-center pl-[12px]"><svg class="w-[20px] h-[20px] mr-[9px]"><use href="#m-layers"/></svg>Τελευταία Είδη Πελατών</div>
  <div class="h-[34.4px] flex items-center pl-[12px]"><svg class="w-[20px] h-[20px] mr-[9px]"><use href="#m-money"/></svg>Διακανονισμοί</div>
  <div class="h-[34.4px] flex items-center pl-[12px]"><svg class="w-[20px] h-[20px] mr-[9px]"><use href="#m-info"/></svg>Πληροφορίες ΚΕΠΥΟ</div>
  <div class="h-[34.4px] flex items-center pl-[12px]"><svg class="w-[20px] h-[20px] mr-[9px]"><use href="#m-alert"/></svg>Εμφάνιση Προειδοποιήσεων Παραστατικού</div>
  <div class="h-[34.4px] flex items-center pl-[12px]"><svg class="w-[20px] h-[6px] mr-[9px]"><use href="#dots"/></svg>Περισσότερα</div>
</div>

<!-- hand drawn annotations on the screenshot -->
<svg class="absolute left-0 top-0 w-[2546px] h-[1255px] pointer-events-none" viewBox="0 0 2546 1255">
  <path d="M2341 222L2392 183" stroke="#000" stroke-width="6"/>
  <path d="M2413 167L2387 172L2401 192z" fill="#000"/>
  <path d="M2189 359H2354" stroke="#000" stroke-width="5"/>
  <path d="M2438 392L2385 368" stroke="#000" stroke-width="5"/>
  <path d="M2368 361L2396 360L2385 382z" fill="#000"/>
</svg>

</body>
</html>
